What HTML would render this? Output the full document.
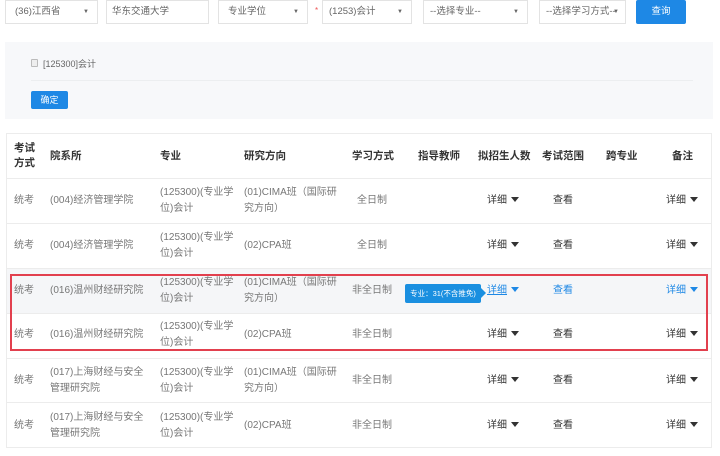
<!DOCTYPE html>
<html><head><meta charset="utf-8"><style>
*{margin:0;padding:0;box-sizing:border-box}
body{width:720px;height:456px;background:#fff;font-family:"Liberation Sans","Noto Sans CJK SC",sans-serif;font-size:10px;color:#777;position:relative;overflow:hidden}
.a{position:absolute;white-space:nowrap}
.sel{position:absolute;top:0;height:24px;border:1px solid #e3e3e3;background:#fff;font-size:9.5px;color:#666;padding:0 0 0 9px;line-height:22px}
.sel .ar{position:absolute;right:8px;top:0;font-size:6px;color:#666}
.btn{position:absolute;background:#1e88e5;color:#fff;text-align:center;font-size:9.5px;border-radius:2px}
.hd{position:absolute;font-weight:bold;color:#333;font-size:10.5px;line-height:15px}
.c{position:absolute;line-height:16px;font-size:10px;color:#777}
.dk{color:#333}
.tri{display:inline-block;width:0;height:0;border-left:4px solid transparent;border-right:4px solid transparent;border-top:5px solid #333;margin-left:4px;vertical-align:1px}
.bl{color:#1e88e5}
.bl .tri{border-top-color:#1e88e5}
.hl{position:absolute;left:6px;width:706px;height:1px;background:#ececec}
</style></head><body>
<div class="sel" style="left:5px;width:93px">(36)江西省<span class="ar">▼</span></div>
<div class="sel" style="left:106px;width:103px;padding-left:5px">华东交通大学</div>
<div class="sel" style="left:218px;width:90px">专业学位<span class="ar">▼</span></div>
<div class="a" style="left:315px;top:6px;color:#e55;font-size:8px">*</div>
<div class="sel" style="left:322px;width:90px;padding-left:6px">(1253)会计<span class="ar">▼</span></div>
<div class="sel" style="left:423px;width:105px;padding-left:6px">--选择专业--<span class="ar">▼</span></div>
<div class="sel" style="left:539px;width:87px;padding-left:6px">--选择学习方式--<span class="ar" style="right:6px">▼</span></div>
<div class="btn" style="left:636px;top:0;width:50px;height:24px;line-height:24px">查询</div>

<div class="a" style="left:5px;top:42px;width:708px;height:77px;background:#f7f8fa"></div>
<div class="a" style="left:31px;top:59px;width:7px;height:8px;border:1px solid #bbb;background:#eee;border-radius:1px"></div>
<div class="a" style="left:43px;top:57px;font-size:9px;color:#666">[125300]会计</div>
<div class="a" style="left:31px;top:80px;width:662px;height:1px;background:#eceef0"></div>
<div class="btn" style="left:31px;top:91px;width:37px;height:18px;line-height:18px;font-size:9px">确定</div>

<div class="a" style="left:6px;top:133px;width:706px;height:315px;border:1px solid #ececec"></div>
<div class="hl" style="top:178px"></div>
<div class="hl" style="top:223px"></div>
<div class="hl" style="top:268px"></div>
<div class="a" style="left:7px;top:269px;width:704px;height:44px;background:#f5f6f8"></div>
<div class="hl" style="top:313px"></div>
<div class="hl" style="top:358px"></div>
<div class="hl" style="top:402px"></div>

<div class="hd" style="left:14px;top:141px">考试<br>方式</div>
<div class="hd" style="left:50px;top:149px">院系所</div>
<div class="hd" style="left:160px;top:149px">专业</div>
<div class="hd" style="left:244px;top:149px">研究方向</div>
<div class="hd" style="left:352px;top:149px">学习方式</div>
<div class="hd" style="left:418px;top:149px">指导教师</div>
<div class="hd" style="left:478px;top:149px">拟招生人数</div>
<div class="hd" style="left:542px;top:149px">考试范围</div>
<div class="hd" style="left:606px;top:149px">跨专业</div>
<div class="hd" style="left:672px;top:149px">备注</div>

<!-- rows -->
<div id="rows"></div>
<div class="c" style="left:14px;top:193px">统考</div><div class="c" style="left:50px;top:193px">(004)经济管理学院</div><div class="c" style="left:160px;top:185px">(125300)(专业学<br>位)会计</div><div class="c" style="left:244px;top:185px">(01)CIMA班（国际研<br>究方向）</div><div class="c" style="left:357px;top:193px">全日制</div><div class="c dk" style="left:487px;top:193px">详细<span class="tri"></span></div><div class="c dk" style="left:553px;top:193px">查看</div><div class="c dk" style="left:666px;top:193px">详细<span class="tri"></span></div>

<div class="c" style="left:14px;top:238px">统考</div><div class="c" style="left:50px;top:238px">(004)经济管理学院</div><div class="c" style="left:160px;top:230px">(125300)(专业学<br>位)会计</div><div class="c" style="left:244px;top:238px">(02)CPA班</div><div class="c" style="left:357px;top:238px">全日制</div><div class="c dk" style="left:487px;top:238px">详细<span class="tri"></span></div><div class="c dk" style="left:553px;top:238px">查看</div><div class="c dk" style="left:666px;top:238px">详细<span class="tri"></span></div>

<div class="c" style="left:14px;top:283px">统考</div><div class="c" style="left:50px;top:283px">(016)温州财经研究院</div><div class="c" style="left:160px;top:275px">(125300)(专业学<br>位)会计</div><div class="c" style="left:244px;top:275px">(01)CIMA班（国际研<br>究方向）</div><div class="c" style="left:352px;top:283px">非全日制</div><div class="c bl" style="left:487px;top:283px;text-decoration:underline">详细<span class="tri"></span></div><div class="c bl" style="left:553px;top:283px">查看</div><div class="c bl" style="left:666px;top:283px">详细<span class="tri"></span></div>
<div class="a" style="left:405px;top:284px;width:76px;height:19px;background:#1a8fe0;border-radius:2px;color:#fff;font-size:7.5px;line-height:19px;text-align:center">专业：31(不含推免)</div>
<div class="a" style="left:481px;top:288px;width:0;height:0;border-top:5px solid transparent;border-bottom:5px solid transparent;border-left:5px solid #1a8fe0"></div>

<div class="c" style="left:14px;top:327px">统考</div><div class="c" style="left:50px;top:327px">(016)温州财经研究院</div><div class="c" style="left:160px;top:319px">(125300)(专业学<br>位)会计</div><div class="c" style="left:244px;top:327px">(02)CPA班</div><div class="c" style="left:352px;top:327px">非全日制</div><div class="c dk" style="left:487px;top:327px">详细<span class="tri"></span></div><div class="c dk" style="left:553px;top:327px">查看</div><div class="c dk" style="left:666px;top:327px">详细<span class="tri"></span></div>

<div class="a" style="left:10px;top:274px;width:698px;height:77px;border:2px solid #e2404e"></div>

<div class="c" style="left:14px;top:373px">统考</div><div class="c" style="left:50px;top:365px">(017)上海财经与安全<br>管理研究院</div><div class="c" style="left:160px;top:365px">(125300)(专业学<br>位)会计</div><div class="c" style="left:244px;top:365px">(01)CIMA班（国际研<br>究方向）</div><div class="c" style="left:352px;top:373px">非全日制</div><div class="c dk" style="left:487px;top:373px">详细<span class="tri"></span></div><div class="c dk" style="left:553px;top:373px">查看</div><div class="c dk" style="left:666px;top:373px">详细<span class="tri"></span></div>

<div class="c" style="left:14px;top:418px">统考</div><div class="c" style="left:50px;top:410px">(017)上海财经与安全<br>管理研究院</div><div class="c" style="left:160px;top:410px">(125300)(专业学<br>位)会计</div><div class="c" style="left:244px;top:418px">(02)CPA班</div><div class="c" style="left:352px;top:418px">非全日制</div><div class="c dk" style="left:487px;top:418px">详细<span class="tri"></span></div><div class="c dk" style="left:553px;top:418px">查看</div><div class="c dk" style="left:666px;top:418px">详细<span class="tri"></span></div>
</body></html>
